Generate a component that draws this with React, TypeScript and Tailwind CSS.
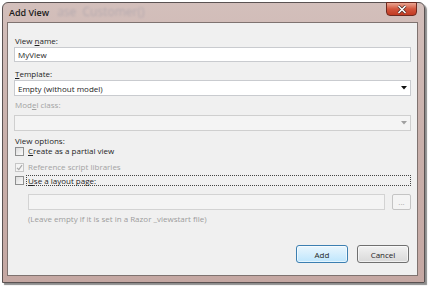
import React from "react";

const font = { fontFamily: '"Open Sans", "Noto Sans", sans-serif' };

const Box = ({ checked = false, disabled = false }: { checked?: boolean; disabled?: boolean }) => (
  <span
    className={
      "flex h-[9px] w-[9px] shrink-0 items-center justify-center border " +
      (disabled ? "border-[#c6c6c6] bg-[#f4f4f4]" : "border-[#8e8f8f] bg-gradient-to-br from-[#dcdcdc] to-[#fbfbfb]")
    }
  >
    {checked && (
      <svg width="7" height="7" viewBox="0 0 7 7">
        <path d="M1 3.8 L2.8 5.6 L6 1.2" fill="none" stroke={disabled ? "#a8a8a8" : "#333"} strokeWidth="1.2" />
      </svg>
    )}
  </span>
);

const Arrow = ({ color }: { color: string }) => (
  <svg width="6" height="4" viewBox="0 0 6 4">
    <path d="M0 0 H6 L3 3.5 Z" fill={color} />
  </svg>
);

export default function App() {
  return (
    <div className="relative h-[288px] w-[429px] overflow-hidden bg-white" style={font}>
      <div className="ml-[2px] mt-[2px] flex h-[281px] w-[423px] flex-col rounded-t-[6px] border border-[#5a5252] bg-gradient-to-b from-[#d3bfbb] via-[#c9b0ab] to-[#c5a8a3] pl-[4px] pr-[6px] pb-[6px] shadow-[2px_2px_1px_rgba(0,0,0,0.45)]">
        {/* title bar */}
        <div className="flex h-[19px] items-start">
          <span className="mt-[4px] ml-[2px] text-[9px] font-semibold leading-[11px] text-[#1b1b1b]">Add View</span>
          <span className="ml-[8px] mt-[2px] text-[12px] leading-[14px] text-[#5a6b8c] opacity-25 blur-[1px]">
            ase&nbsp;&nbsp;Customer()
          </span>
          <div className="ml-auto mr-[1px] mt-[-1px] flex h-[14px] w-[31px] items-center justify-center rounded-b-[4px] border border-[#6e2a20] bg-gradient-to-b from-[#e9a592] via-[#d2553d] to-[#c13a22]">
            <svg width="10" height="9" viewBox="0 0 10 9">
              <path d="M1.5 1 L8.5 8 M8.5 1 L1.5 8" stroke="#4a2a25" strokeWidth="3" />
              <path d="M1.5 1 L8.5 8 M8.5 1 L1.5 8" stroke="#fff" strokeWidth="1.6" />
            </svg>
          </div>
        </div>

        {/* client area */}
        <div className="flex flex-1 flex-col border border-[#7f7370] bg-[#f0f0f0] px-[6px] text-[8px] leading-[11px] text-[#1e1e1e]">
          <div className="mt-[12px] ml-[1px]">
            View <span className="underline">n</span>ame:
          </div>
          <div className="mt-[1px] flex h-[15px] items-center border border-[#c9cbcf] bg-white px-[3px]">MyView</div>

          <div className="mt-[6px] ml-[1px]">
            <span className="underline">T</span>emplate:
          </div>
          <div className="mt-[1px] flex h-[16px] items-center justify-between border border-[#c9cbcf] bg-white px-[3px]">
            <span>Empty (without model)</span>
            <Arrow color="#111" />
          </div>

          <div className="mt-[3px] ml-[1px] text-[#a3a3a3]">
            Mod<span className="underline">e</span>l class:
          </div>
          <div className="mt-[5px] flex h-[16px] items-center justify-end border border-[#cfcfcf] bg-[#f4f4f4] px-[3px]">
            <Arrow color="#a0a0a0" />
          </div>

          <div className="mt-[5px] ml-[1px] h-[10px] leading-[10px]">View options:</div>
          <div className="flex h-[10px] items-center gap-[4px] pl-[1px] leading-[10px]">
            <Box />
            <span>
              <span className="underline">C</span>reate as a partial view
            </span>
          </div>
          <div className="mt-[6px] flex h-[10px] items-center gap-[4px] pl-[1px] leading-[10px] text-[#a3a3a3]">
            <Box checked disabled />
            <span>Reference script libraries</span>
          </div>
          <div className="mt-[3px] flex h-[11px] items-center gap-[2px] pl-[1px] leading-[10px]">
            <Box />
            <span className="flex h-[11px] flex-1 items-center border border-dotted border-[#444] pl-[1px]">
              <span className="underline">U</span>se a layout page:
            </span>
          </div>

          <div className="mt-[8px] flex items-center gap-[7px] pl-[14px]">
            <div className="h-[16px] flex-1 border border-[#d3d3d3] bg-[#f4f4f4]" />
            <div className="flex h-[16px] w-[19px] items-center justify-center rounded-[2px] border border-[#c4c4c4] bg-[#f4f4f4] text-[8px] leading-[8px] text-[#a8a8a8]">
              ...
            </div>
          </div>
          <div className="mt-[4px] pl-[14px] leading-[10px] text-[#9c9c9c]">
            (Leave empty if it is set in a Razor _viewstart file)
          </div>

          <div className="mt-[21px] flex justify-end gap-[9px] pr-[2px]">
            <div className="flex h-[18px] w-[52px] items-center justify-center rounded-[3px] border border-[#3c7fb1] bg-gradient-to-b from-[#eaf6fd] to-[#bee6fd] shadow-[inset_0_0_0_1px_rgba(255,255,255,0.6)]">
              Add
            </div>
            <div className="flex h-[18px] w-[52px] items-center justify-center rounded-[3px] border border-[#707070] bg-gradient-to-b from-[#f2f2f2] to-[#d9d9d9] shadow-[inset_0_0_0_1px_rgba(255,255,255,0.6)]">
              Cancel
            </div>
          </div>
        </div>
      </div>
    </div>
  );
}
